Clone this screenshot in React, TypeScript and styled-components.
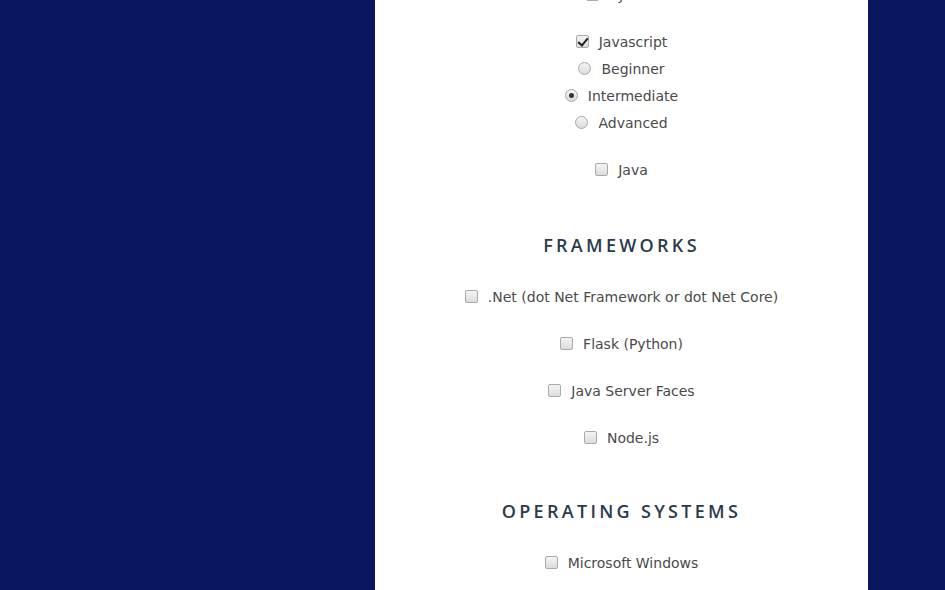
import styled, { createGlobalStyle, css } from "styled-components";

const GlobalStyle = createGlobalStyle`
  html, body {
    margin: 0;
    padding: 0;
    height: 100%;
    overflow: hidden;
    background: #0a1760;
  }
  #root {
    height: 100%;
  }
`;

const Page = styled.div`
  height: 590px;
  display: flex;
  justify-content: flex-start;
  padding-left: 375px;
  box-sizing: border-box;
  overflow: hidden;
`;

const Panel = styled.div`
  width: 493px;
  background: #fff;
  font-family: "DejaVu Sans", "Open Sans", sans-serif;
  color: #4a4a4a;
  text-align: center;
`;

const Content = styled.div`
  margin-top: -19px;
  display: flex;
  flex-direction: column;
  align-items: center;
`;

const Row = styled.label<{ $sub?: boolean; $first?: boolean }>`
  display: flex;
  align-items: center;
  gap: 10px;
  height: 27px;
  font-size: 14px;
  margin-top: ${(p) => (p.$sub || p.$first ? "0" : "20px")};
`;

const Heading = styled.h2<{ $gap?: number }>`
  margin: ${(p) => p.$gap ?? 50}px 0 26px;
  font-family: "Open Sans", "DejaVu Sans", sans-serif;
  font-size: 18px;
  font-weight: 600;
  letter-spacing: 3.3px;
  color: #2c3a4c;
  line-height: 24px;
`;

const boxBase = css`
  appearance: none;
  margin: 0;
  width: 13px;
  height: 13px;
  border: 1px solid #a9a9a9;
  background: linear-gradient(#f4f4f4, #dcdcdc);
  box-sizing: border-box;
  position: relative;
  flex: none;
`;

const Check = styled.input.attrs({ type: "checkbox" })`
  ${boxBase};
  border-radius: 2px;
  &:checked::after {
    content: "";
    position: absolute;
    left: 3px;
    top: 0px;
    width: 4px;
    height: 8px;
    border: solid #222;
    border-width: 0 2px 2px 0;
    transform: rotate(40deg);
  }
`;

const Radio = styled.input.attrs({ type: "radio" })`
  ${boxBase};
  border-radius: 50%;
  &:checked::after {
    content: "";
    position: absolute;
    left: 3px;
    top: 3px;
    width: 5px;
    height: 5px;
    border-radius: 50%;
    background: #333;
  }
`;

const frameworks = [
  ".Net (dot Net Framework or dot Net Core)",
  "Flask (Python)",
  "Java Server Faces",
  "Node.js",
];

export default function App() {
  return (
    <>
      <GlobalStyle />
      <Page>
        <Panel>
          <Content>
            <Row $first>
              <Check />
              <span>Python</span>
            </Row>
            <Row>
              <Check defaultChecked />
              <span>Javascript</span>
            </Row>
            <Row $sub>
              <Radio name="js" />
              <span>Beginner</span>
            </Row>
            <Row $sub>
              <Radio name="js" defaultChecked />
              <span>Intermediate</span>
            </Row>
            <Row $sub>
              <Radio name="js" />
              <span>Advanced</span>
            </Row>
            <Row>
              <Check />
              <span>Java</span>
            </Row>

            <Heading>FRAMEWORKS</Heading>
            {frameworks.map((f, i) => (
              <Row key={f} $first={i === 0}>
                <Check />
                <span>{f}</span>
              </Row>
            ))}

            <Heading $gap={48}>OPERATING SYSTEMS</Heading>
            <Row $first>
              <Check />
              <span>Microsoft Windows</span>
            </Row>
          </Content>
        </Panel>
      </Page>
    </>
  );
}
